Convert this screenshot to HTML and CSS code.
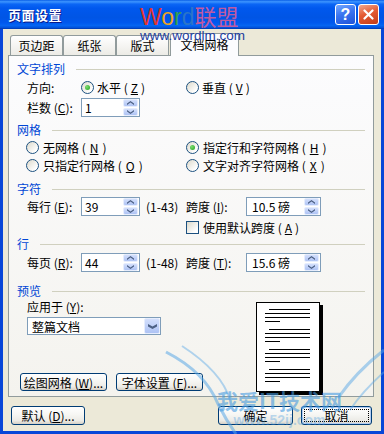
FILE: index.html
```html
<!DOCTYPE html>
<html lang="zh-CN">
<head>
  <meta charset="UTF-8">
  <title>页面设置</title>
  <link rel="stylesheet" href="styles.css">
</head>
<body>
  <div class="window">
    <div class="titlebar">
      <span class="title">页面设置</span>
      <div class="caption-btns">
        <span class="cbtn help">?</span>
        <span class="cbtn close">
          <svg width="11" height="11" viewBox="0 0 11 11"><path d="M1.5 1.5 L9.5 9.5 M9.5 1.5 L1.5 9.5" stroke="#fff" stroke-width="2.2" stroke-linecap="round"/></svg>
        </span>
      </div>
    </div>

    <div class="frame">
      <div class="tabs">
        <div class="tab">页边距</div>
        <div class="tab">纸张</div>
        <div class="tab">版式</div>
        <div class="tab active">文档网格</div>
      </div>

      <div class="panel">
        <div class="gtitle g1">文字排列</div>
        <div class="row r-dir">
          <span>方向:</span>
          <span class="opt wide"><i class="radio on"></i>水平 (<u>Z</u>)</span>
          <span class="opt right"><i class="radio"></i>垂直 (<u>V</u>)</span>
        </div>
        <div class="row r-cols">
          <span>栏数 (<u>C</u>):</span>
          <div class="spin"><span class="val">1</span><span class="arrows"><b class="up"></b><b class="down"></b></span></div>
        </div>

        <div class="gtitle g2">网格</div>
        <div class="row opts">
          <span class="opt"><i class="radio"></i>无网格 (<u>N</u>)</span>
          <span class="opt"><i class="radio on"></i>指定行和字符网格 (<u>H</u>)</span>
        </div>
        <div class="row opts">
          <span class="opt"><i class="radio"></i>只指定行网格 (<u>O</u>)</span>
          <span class="opt"><i class="radio"></i>文字对齐字符网格 (<u>X</u>)</span>
        </div>

        <div class="gtitle g3">字符</div>
        <div class="row">
          <span>每行 (<u>E</u>):</span>
          <div class="spin"><span class="val">39</span><span class="arrows"><b class="up"></b><b class="down"></b></span></div>
          <span>(1-43)</span>
          <span>跨度 (<u>I</u>):</span>
          <div class="spin wide"><span class="val">10.5 磅</span><span class="arrows"><b class="up"></b><b class="down"></b></span></div>
        </div>
        <div class="row r-check">
          <span class="opt right"><i class="check"></i>使用默认跨度 (<u>A</u>)</span>
        </div>

        <div class="gtitle g4">行</div>
        <div class="row r-lines">
          <span>每页 (<u>R</u>):</span>
          <div class="spin"><span class="val">44</span><span class="arrows"><b class="up"></b><b class="down"></b></span></div>
          <span>(1-48)</span>
          <span>跨度 (<u>T</u>):</span>
          <div class="spin wide"><span class="val">15.6 磅</span><span class="arrows"><b class="up"></b><b class="down"></b></span></div>
        </div>

        <div class="gtitle g5">预览</div>
        <div class="preview">
          <div class="apply">
            <div class="apply-label">应用于 (<u>Y</u>):</div>
            <div class="select"><span class="val">整篇文档</span><span class="dd"><b class="down big"></b></span></div>
            <div class="btn-row">
              <span class="btn">绘图网格 (<u>W</u>)...</span>
              <span class="btn">字体设置 (<u>F</u>)...</span>
            </div>
          </div>
          <div class="page">
            <div class="grp"><i class="ln first"></i><i class="ln"></i><i class="ln"></i><i class="ln short"></i></div>
            <div class="grp"><i class="ln first"></i><i class="ln"></i><i class="ln"></i><i class="ln short"></i></div>
            <div class="grp"><i class="ln first"></i><i class="ln"></i><i class="ln"></i><i class="ln short"></i></div>
            <div class="grp"><i class="ln first"></i><i class="ln"></i><i class="ln"></i><i class="ln short"></i></div>
          </div>
        </div>
      </div>

      <div class="footer">
        <span class="btn b-default">默认 (<u>D</u>)...</span>
        <span class="btn b-ok">确定</span>
        <span class="btn b-cancel"><span class="focus">取消</span></span>
      </div>
    </div>

    <!-- водяные знаки сайта поверх окна -->
    <div class="wm-top">
      <div class="wm-name"><span class="c-w">W</span><span class="c-o">o</span><span class="c-r">r</span><span class="c-d">d</span><span class="c-cn">联盟</span></div>
      <div class="wm-url">www.wordlm.com</div>
    </div>
    <svg class="wm-wings" width="384" height="434" viewBox="0 0 384 434">
      <path d="M166 352 Q205 372 218 404 Q226 420 236 434" stroke="#5aa8e6" stroke-width="3" fill="none" opacity="0.55"/>
      <path d="M182 346 Q222 372 230 400" stroke="#5aa8e6" stroke-width="2" fill="none" opacity="0.45"/>
      <path d="M384 350 Q356 372 338 398" stroke="#5aa8e6" stroke-width="3" fill="none" opacity="0.5"/>
      <path d="M384 372 Q362 392 350 410" stroke="#5aa8e6" stroke-width="2" fill="none" opacity="0.45"/>
    </svg>
    <div class="wm-bottom">
      <div class="wm-site">我爱IT技术网</div>
      <div class="wm-site-url">www.52ij.com</div>
    </div>
  </div>
</body>
</html>
```

FILE: styles.css
```css
* {
  box-sizing: border-box;
}

html, body {
  margin: 0;
  padding: 0;
}

body {
  width: 384px;
  height: 434px;
  overflow: hidden;
  font-family: "Noto Sans CJK SC", sans-serif;
  font-size: 12px;
  color: #000;
  background: #ece9d8;
}

u {
  text-decoration: underline;
  text-underline-offset: 1px;
}

.window {
  position: relative;
  width: 384px;
  height: 434px;
  display: flex;
  flex-direction: column;
}

/* Заголовок окна */
.titlebar {
  height: 29px;
  flex: none;
  display: flex;
  align-items: center;
  padding: 0 5px 0 8px;
  background: linear-gradient(to bottom, #0a5fe7 0%, #3d95ff 6%, #0b66f5 14%, #0058ee 28%, #0055e5 60%, #0058ee 78%, #0565f2 88%, #0250d8 96%, #0035a8 100%);
}

.title {
  color: #fff;
  font-weight: bold;
  font-size: 13px;
  letter-spacing: 0.5px;
  text-shadow: 1px 1px 0 #0a1a8a;
}

.caption-btns {
  margin-left: auto;
  display: flex;
  gap: 2px;
}

.cbtn {
  width: 21px;
  height: 21px;
  border: 1px solid #fff;
  border-radius: 3px;
  display: flex;
  align-items: center;
  justify-content: center;
}

.help {
  background: linear-gradient(160deg, #74a8ff 0%, #3a74f0 45%, #1d52d8 100%);
  color: #fff;
  font-family: "Liberation Sans", sans-serif;
  font-weight: bold;
  font-size: 16px;
}

.close {
  background: linear-gradient(160deg, #f3a98f 0%, #e45a32 45%, #c23c18 100%);
}

/* Рамка и тело диалога */
.frame {
  flex: 1;
  display: flex;
  flex-direction: column;
  border: 3px solid #0846d8;
  border-top: none;
  padding: 4px 7px 0 5px;
}

.tabs {
  display: flex;
  align-items: flex-end;
  height: 22px;
  padding-left: 2px;
}

.tab {
  width: 53px;
  height: 20px;
  border: 1px solid #919b9c;
  border-bottom: none;
  border-radius: 3px 3px 0 0;
  background: linear-gradient(#fff, #ecebe6);
  text-align: center;
  line-height: 20px;
}

.tab.active {
  width: 69px;
  height: 23px;
  margin-left: 1px;
  margin-bottom: -1px;
  background: #fcfcfe;
  line-height: 21px;
  position: relative;
  z-index: 1;
}

.panel {
  height: 342px;
  border: 1px solid #919b9c;
  background: linear-gradient(#fcfcfe, #f4f3ee);
  padding: 0 8px;
  display: flex;
  flex-direction: column;
}

.gtitle {
  height: 16px;
  line-height: 16px;
  color: #0046d5;
  display: flex;
  align-items: center;
  gap: 11px;
}

.gtitle::after {
  content: "";
  flex: 1;
  border-top: 1px solid #d0d0bf;
}

.g1 { margin-top: 5px; }
.g2 { margin-top: 5px; }
.g3 { margin-top: 7px; }
.g5 { margin-top: 11px; }

.row {
  display: grid;
  grid-template-columns: 54px 65px 40px 60px 1fr;
  align-items: center;
  height: 19px;
  margin-left: 10px;
  white-space: nowrap;
}

.r-dir { margin-top: 1px; }
.r-cols { margin-top: 1px; }
.r-check { height: 18px; margin-top: 2px; }
.r-lines { margin-top: 1px; }

.row.opts {
  grid-template-columns: 160px 1fr;
  height: 18px;
  margin-left: 9px;
}

.opt {
  display: flex;
  align-items: center;
  gap: 3px;
}

.opt.wide { grid-column: 2 / span 2; }
.opt.right { grid-column: 4 / span 2; }

.opts .opt { gap: 4px; }

/* Радиокнопки и флажок в стиле XP */
.radio {
  width: 13px;
  height: 13px;
  flex: none;
  border-radius: 50%;
  border: 1px solid #1c5180;
  background: linear-gradient(135deg, #dcd9cb, #fff 80%);
  position: relative;
}

.radio.on::after {
  content: "";
  position: absolute;
  left: 3px;
  top: 3px;
  width: 5px;
  height: 5px;
  border-radius: 50%;
  background: radial-gradient(circle at 35% 35%, #7ddc6f, #21a121);
}

.check {
  width: 13px;
  height: 13px;
  flex: none;
  border: 1px solid #1c5180;
  background: linear-gradient(135deg, #dcd9cb, #fff 80%);
  margin-right: 1px;
}

/* Поля со счётчиком */
.spin {
  width: 59px;
  height: 19px;
  border: 1px solid #7f9db9;
  background: #fff;
  display: flex;
  align-items: center;
  padding-left: 3px;
}

.spin.wide {
  width: 75px;
  padding-left: 5px;
}

.val {
  flex: 1;
  white-space: nowrap;
}

.arrows {
  width: 15px;
  height: 17px;
  margin-right: 1px;
  display: flex;
  flex-direction: column;
  gap: 1px;
}

.arrows b,
.dd {
  flex: 1;
  display: flex;
  align-items: center;
  justify-content: center;
  border: 1px solid #e6edfd;
  border-radius: 2px;
  background: linear-gradient(#d3dffc, #aec3f4);
}

.up::before,
.down::before {
  content: "";
  width: 7px;
  height: 4px;
  background: #4d6185;
  clip-path: polygon(0 2.5px, 3.5px 0, 7px 2.5px, 7px 4px, 3.5px 1.5px, 0 4px);
}

.down::before {
  transform: rotate(180deg);
}

.down.big {
  display: flex;
}

.down.big::before {
  width: 9px;
  height: 5px;
  clip-path: polygon(0 2.5px, 4.5px 0, 9px 2.5px, 9px 5px, 4.5px 2.5px, 0 5px);
}

/* Предпросмотр */
.preview {
  display: flex;
  margin-left: 10px;
}

.apply {
  width: 229px;
}

.apply-label {
  height: 16px;
  line-height: 16px;
}

.select {
  width: 134px;
  height: 18px;
  margin-top: 2px;
  border: 1px solid #7f9db9;
  background: #fff;
  display: flex;
  align-items: center;
  padding-left: 4px;
}

.dd {
  flex: none;
  width: 16px;
  height: 16px;
}

.btn-row {
  display: flex;
  gap: 9px;
  margin-top: 38px;
  margin-left: -7px;
}

.btn {
  display: flex;
  align-items: center;
  justify-content: center;
  height: 18px;
  width: 87px;
  border: 1px solid #003c74;
  border-radius: 3px;
  background: linear-gradient(#fff 0%, #f6f6f3 45%, #ecebe6 80%, #d6d0c5 100%);
  white-space: nowrap;
}

.page {
  width: 64px;
  height: 90px;
  margin-top: 3px;
  border: 1px solid #000;
  background: #fff;
  box-shadow: 3px 3px 0 #000;
  padding: 6px 0 0 8px;
  display: flex;
  flex-direction: column;
  gap: 7px;
}

.grp {
  display: flex;
  flex-direction: column;
  gap: 3px;
}

.ln {
  display: block;
  width: 45px;
  height: 1px;
  background: #000;
}

.ln.first {
  width: 41px;
  margin-left: 4px;
}

.ln.short {
  width: 15px;
}

/* Кнопки диалога */
.footer {
  display: flex;
  height: 19px;
  margin-top: 9px;
  padding: 0 2px 0 3px;
}

.footer .btn {
  height: 19px;
}

.b-default { width: 74px; }

.b-ok {
  width: 75px;
  margin-left: auto;
}

.b-cancel {
  width: 71px;
  margin-left: 8px;
  box-shadow: inset 0 0 0 1px #b4cdf2;
  padding: 2px;
}

.focus {
  flex: 1;
  align-self: stretch;
  display: flex;
  align-items: center;
  justify-content: center;
  outline: 1px dotted #000;
  outline-offset: -1px;
}

/* Водяные знаки */
.wm-top {
  position: absolute;
  left: 140px;
  top: 2px;
  z-index: 2;
  pointer-events: none;
}

.wm-name {
  font-size: 23px;
  line-height: 26px;
  font-family: "Liberation Sans", "Noto Sans CJK SC", sans-serif;
}

.wm-name .c-cn {
  font-family: "Noto Sans CJK SC", sans-serif;
  font-size: 22px;
}

.c-w { color: #e2352e; }
.c-o { color: #f0a41c; }
.c-r { color: #34a04a; }
.c-d { color: #2a74c8; }
.c-cn { color: #c05aa0; }

.wm-url {
  font-family: "Liberation Sans", sans-serif;
  font-size: 13.5px;
  line-height: 14px;
  color: #1c3c9c;
  margin-top: -1px;
}

.wm-wings {
  position: absolute;
  left: 0;
  top: 0;
  z-index: 2;
  pointer-events: none;
}

.wm-bottom {
  position: absolute;
  left: 217px;
  top: 388px;
  z-index: 2;
  pointer-events: none;
  text-align: center;
}

.wm-site {
  font-size: 21px;
  line-height: 24px;
  font-weight: bold;
  color: rgba(70, 155, 225, 0.6);
}

.wm-site-url {
  font-family: "Liberation Sans", sans-serif;
  font-size: 14px;
  line-height: 16px;
  font-weight: bold;
  color: rgba(70, 155, 225, 0.35);
}
```
